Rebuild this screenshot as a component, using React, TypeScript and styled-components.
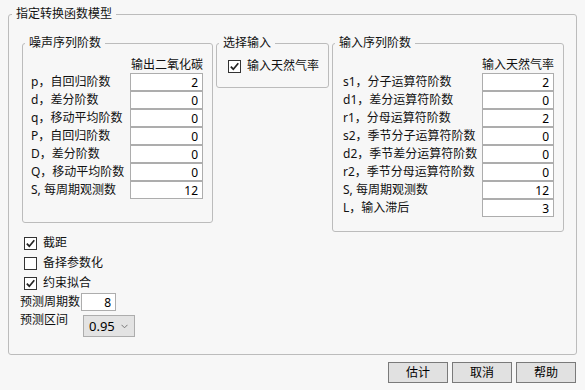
import styled, { createGlobalStyle } from 'styled-components';

const noiseOrders = [
  { label: 'p，自回归阶数', value: '2' },
  { label: 'd，差分阶数', value: '0' },
  { label: 'q，移动平均阶数', value: '0' },
  { label: 'P，自回归阶数', value: '0' },
  { label: 'D，差分阶数', value: '0' },
  { label: 'Q，移动平均阶数', value: '0' },
  { label: 'S, 每周期观测数', value: '12' },
];

const inputOrders = [
  { label: 's1，分子运算符阶数', value: '2' },
  { label: 'd1，差分运算符阶数', value: '0' },
  { label: 'r1，分母运算符阶数', value: '2' },
  { label: 's2，季节分子运算符阶数', value: '0' },
  { label: 'd2，季节差分运算符阶数', value: '0' },
  { label: 'r2，季节分母运算符阶数', value: '0' },
  { label: 'S, 每周期观测数', value: '12' },
  { label: 'L，输入滞后', value: '3' },
];

const options = [
  { label: '截距', checked: true },
  { label: '备择参数化', checked: false },
  { label: '约束拟合', checked: true },
];

const GlobalStyle = createGlobalStyle`
  html, body {
    margin: 0;
    background: #f7f7f7;
  }
  body {
    font-family: "Noto Sans", "Noto Sans CJK SC", sans-serif;
    font-size: 12px;
    line-height: 16px;
    color: #111;
  }
`;

function CheckBox({ checked }: { checked: boolean }) {
  return (
    <Box>
      {checked && (
        <svg width="11" height="11" viewBox="0 0 11 11">
          <path d="M1.8 5.6 L4.3 8.2 L9.3 2.2" fill="none" stroke="#222" strokeWidth="1.7" />
        </svg>
      )}
    </Box>
  );
}

function App() {
  return (
    <Page>
      <GlobalStyle />
      <Outer>
        <Legend>指定转换函数模型</Legend>
        <OuterBody>
          <Groups>
            <Group $width={191} $padRight={9} $padLeft={8} $padBottom={23}>
              <Legend>噪声序列阶数</Legend>
              <OrderGrid $inputWidth={73}>
                <ColHead>输出二氧化碳</ColHead>
                {noiseOrders.map((row) => (
                  <Row key={row.label}>
                    <RowLabel>{row.label}</RowLabel>
                    <NumInput defaultValue={row.value} readOnly />
                  </Row>
                ))}
              </OrderGrid>
            </Group>
            <Group $width={113} $padRight={6} $padLeft={11} $padBottom={13}>
              <Legend>选择输入</Legend>
              <CheckRow $top={7}>
                <CheckBox checked />
                <span>输入天然气率</span>
              </CheckRow>
            </Group>
            <Group $width={232} $padRight={9} $padLeft={10} $padBottom={14}>
              <Legend>输入序列阶数</Legend>
              <OrderGrid $inputWidth={72}>
                <ColHead>输入天然气率</ColHead>
                {inputOrders.map((row) => (
                  <Row key={row.label}>
                    <RowLabel>{row.label}</RowLabel>
                    <NumInput defaultValue={row.value} readOnly />
                  </Row>
                ))}
              </OrderGrid>
            </Group>
          </Groups>

          <Options>
            {options.map((opt) => (
              <OptionRow key={opt.label}>
                <CheckBox checked={opt.checked} />
                <span>{opt.label}</span>
              </OptionRow>
            ))}
          </Options>

          <Forecast>
            <FormLabel>预测周期数</FormLabel>
            <PeriodInput defaultValue="8" readOnly />
            <FormLabel>预测区间</FormLabel>
            <Dropdown>
              <span>0.95</span>
              <svg width="7" height="5" viewBox="0 0 7 5">
                <path d="M0.5 0.8 L3.5 3.8 L6.5 0.8" fill="none" stroke="#777" strokeWidth="1" />
              </svg>
            </Dropdown>
          </Forecast>
        </OuterBody>
      </Outer>

      <Buttons>
        <Button>估计</Button>
        <Button>取消</Button>
        <Button>帮助</Button>
      </Buttons>
    </Page>
  );
}

const Page = styled.div`
  width: 585px;
  height: 390px;
  box-sizing: border-box;
  padding: 6px 8px 0 8px;
`;

const Outer = styled.fieldset`
  margin: 0;
  padding: 0;
  width: 569px;
  height: 349px;
  box-sizing: border-box;
  border: 1px solid #bcbcbc;
  border-radius: 3px;
  min-inline-size: 0;
`;

const Legend = styled.legend`
  margin-left: 3px;
  padding: 0 4px;
  line-height: 16px;
  white-space: nowrap;
`;

const OuterBody = styled.div`
  padding: 13px 0 0 13px;
`;

const Groups = styled.div`
  display: flex;
  align-items: flex-start;
  gap: 3px;
`;

const Group = styled.fieldset<{ $width: number; $padLeft: number; $padRight: number; $padBottom: number }>`
  margin: 0;
  width: ${(p) => p.$width}px;
  box-sizing: border-box;
  padding: 0 ${(p) => p.$padRight}px ${(p) => p.$padBottom}px ${(p) => p.$padLeft}px;
  border: 1px solid #bcbcbc;
  border-radius: 3px;
  min-inline-size: 0;

  & > legend {
    margin-left: ${(p) => 2 - p.$padLeft}px;
  }
`;

const OrderGrid = styled.div<{ $inputWidth: number }>`
  display: grid;
  grid-template-columns: 1fr ${(p) => p.$inputWidth}px;
  padding-top: 6px;
`;

const ColHead = styled.div`
  grid-column: 2;
  justify-self: end;
  white-space: nowrap;
  height: 16px;
`;

const Row = styled.div`
  display: contents;
`;

const RowLabel = styled.div`
  height: 18px;
  line-height: 18px;
  white-space: nowrap;
`;

const NumInput = styled.input`
  box-sizing: border-box;
  width: 100%;
  height: 18px;
  margin: 0;
  padding: 0 4px 0 0;
  border: 1px solid #adadad;
  background: #fff;
  font: inherit;
  color: #000;
  text-align: right;
  outline: none;
`;

const CheckRow = styled.label<{ $top: number }>`
  display: flex;
  align-items: center;
  gap: 6px;
  height: 16px;
  margin-top: ${(p) => p.$top}px;
  white-space: nowrap;
`;

const Box = styled.span`
  flex: none;
  width: 13px;
  height: 13px;
  box-sizing: border-box;
  border: 1px solid #333;
  background: #fff;
  display: flex;
  align-items: center;
  justify-content: center;
`;

const Options = styled.div`
  margin-top: 1px;
  padding-left: 2px;
`;

const OptionRow = styled.label`
  display: flex;
  align-items: center;
  gap: 6px;
  height: 20px;
`;

const Forecast = styled.div`
  display: grid;
  grid-template-columns: 61px auto;
  justify-content: start;
  margin-left: -2px;
`;

const FormLabel = styled.div`
  line-height: 18px;
  white-space: nowrap;
`;

const PeriodInput = styled(NumInput)`
  width: 35px;
`;

const Dropdown = styled.div`
  margin: 4px 0 0 2px;
  width: 52px;
  height: 22px;
  box-sizing: border-box;
  border: 1px solid #adadad;
  background: #e3e3e3;
  display: flex;
  align-items: center;
  justify-content: space-between;
  padding: 0 6px 0 5px;
  color: #000;
  font-size: 13px;
`;

const Buttons = styled.div`
  display: flex;
  justify-content: flex-end;
  gap: 4px;
  margin-top: 7px;
  padding-right: 1px;
`;

const Button = styled.button`
  width: 60px;
  height: 21px;
  margin: 0;
  padding: 0;
  border: 1px solid #7a7a7a;
  background: #e1e1e1;
  font: inherit;
  color: #000;
`;

export default App;
